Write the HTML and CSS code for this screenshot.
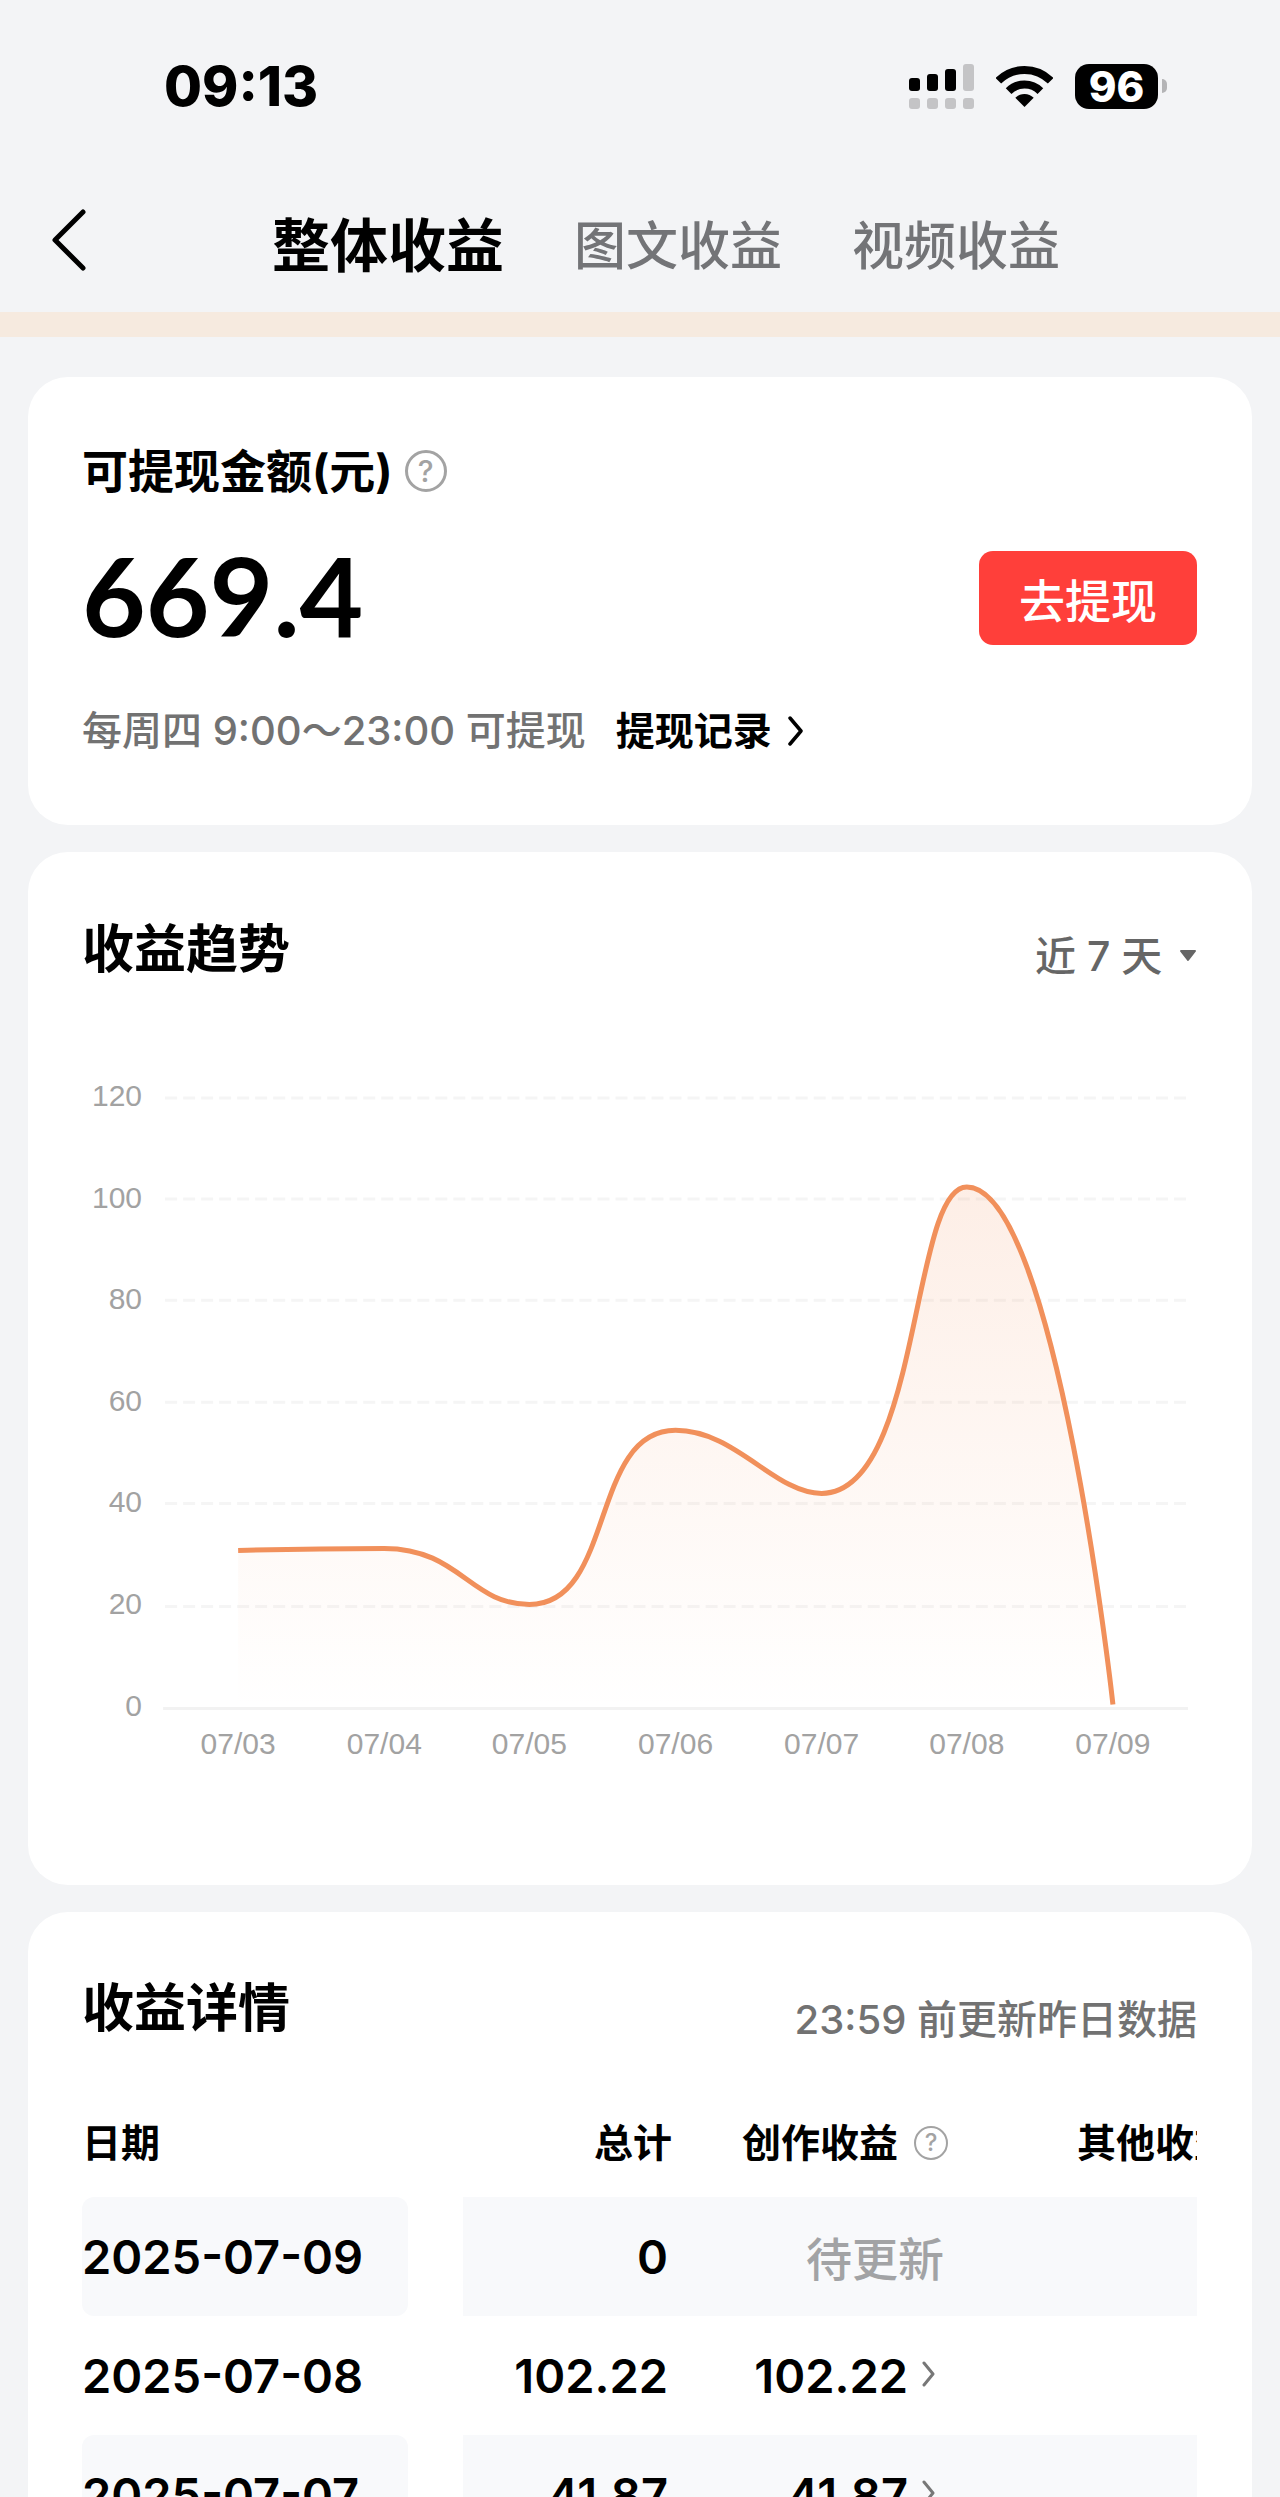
FILE: index.html
```
<!DOCTYPE html>
<html lang="zh-CN">
<head>
    <meta charset="UTF-8">
    <meta name="viewport" content="width=device-width, initial-scale=1.0">
    <title>整体收益</title>
    <link rel="stylesheet" href="styles.css">
</head>
<body>
    <div class="page">
        <div class="status-bar">
            <span class="time">09:13</span>
            <div class="status-icons">
                <svg class="signal" width="65" height="45" viewBox="0 0 65 45">
                    <rect x="0" y="14" width="11" height="13" rx="3"/>
                    <rect x="18" y="10" width="11" height="17" rx="3"/>
                    <rect x="36" y="5" width="11" height="22" rx="3"/>
                    <g fill="#c4c4c6">
                        <rect x="54" y="0" width="11" height="27" rx="3"/>
                        <rect x="0" y="34" width="11" height="11" rx="3"/>
                        <rect x="18" y="34" width="11" height="11" rx="3"/>
                        <rect x="36" y="34" width="11" height="11" rx="3"/>
                        <rect x="54" y="34" width="11" height="11" rx="3"/>
                    </g>
                </svg>
                <svg class="wifi" width="57" height="42" viewBox="0 0 57 42">
                    <path d="M2.3 15.8A37 37 0 0 1 54.7 15.8M12.6 26.1A22.5 22.5 0 0 1 44.4 26.1" fill="none" stroke="#000" stroke-width="8"/>
                    <path d="M28.5 42L19.3 32.8A13 13 0 0 1 37.7 32.8Z"/>
                </svg>
                <div class="battery">96</div>
            </div>
        </div>

        <header class="nav-bar">
            <button type="button" class="back" aria-label="返回">
                <svg width="34" height="62" viewBox="0 0 34 62">
                    <path d="M31 3L3 31L31 59" fill="none" stroke="#000" stroke-width="5" stroke-linecap="round" stroke-linejoin="round"/>
                </svg>
            </button>
            <nav class="tabs">
                <a href="#" class="active">整体收益</a>
                <a href="#">图文收益</a>
                <a href="#">视频收益</a>
            </nav>
        </header>
        <div class="notice"></div>

        <main>
            <section class="card balance">
                <h2>可提现金额(元)<button type="button" class="help" aria-label="说明">?</button></h2>
                <div class="amount-row">
                    <span class="amount">669.4</span>
                    <button type="button" class="withdraw">去提现</button>
                </div>
                <p class="tip">
                    <span>每周四 9:00～23:00 可提现</span>
                    <a href="#">提现记录
                        <svg width="16" height="30" viewBox="0 0 16 30">
                            <path d="M2 2L13 15L2 28" fill="none" stroke="#000" stroke-width="3.5" stroke-linecap="round" stroke-linejoin="round"/>
                        </svg>
                    </a>
                </p>
            </section>

            <section class="card trend">
                <div class="card-head">
                    <h3>收益趋势</h3>
                    <label class="range">
                        <select aria-label="时间范围">
                            <option>近 7 天</option>
                        </select>
                        <svg width="18" height="12" viewBox="0 0 18 12">
                            <path d="M2 1H16L9 10Z" fill="#666" stroke="#666" stroke-width="2" stroke-linejoin="round"/>
                        </svg>
                    </label>
                </div>
                <svg class="chart" viewBox="0 0 1114 710">
                    <defs>
                        <linearGradient id="area" x1="0" y1="0" x2="0" y2="1">
                            <stop offset="0" stop-color="#f38f58" stop-opacity="0.15"/>
                            <stop offset="1" stop-color="#f38f58" stop-opacity="0"/>
                        </linearGradient>
                    </defs>
                    <g class="grid">
                        <path d="M83 38H1104M83 139H1104M83 240H1104M83 342H1104M83 443H1104M83 546H1104"/>
                    </g>
                    <path class="axis" d="M81 648H1105"/>
                    <path d="M156 490C156 490 231 488 302 488C377 488 388 544 447 544C533 544 507 370 593 370C653 370 692 433 739 433C838 433 828 127 884 127C973 127 1030 644 1030 644V648H156Z" fill="url(#area)"/>
                    <path class="line" d="M156 490C156 490 231 488 302 488C377 488 388 544 447 544C533 544 507 370 593 370C653 370 692 433 739 433C838 433 828 127 884 127C973 127 1030 644 1030 644"/>
                    <g class="y-labels">
                        <text x="60" y="46">120</text>
                        <text x="60" y="148">100</text>
                        <text x="60" y="249">80</text>
                        <text x="60" y="351">60</text>
                        <text x="60" y="452">40</text>
                        <text x="60" y="554">20</text>
                        <text x="60" y="655">0</text>
                    </g>
                    <g class="x-labels">
                        <text x="156" y="693">07/03</text>
                        <text x="302" y="693">07/04</text>
                        <text x="447" y="693">07/05</text>
                        <text x="593" y="693">07/06</text>
                        <text x="739" y="693">07/07</text>
                        <text x="884" y="693">07/08</text>
                        <text x="1030" y="693">07/09</text>
                    </g>
                </svg>
            </section>

            <section class="card detail">
                <div class="card-head">
                    <h3>收益详情</h3>
                    <span class="update">23:59 前更新昨日数据</span>
                </div>
                <div class="tables">
                    <table class="dates">
                        <thead>
                            <tr><th>日期</th></tr>
                        </thead>
                        <tbody>
                            <tr><td>2025-07-09</td></tr>
                            <tr><td>2025-07-08</td></tr>
                            <tr><td>2025-07-07</td></tr>
                        </tbody>
                    </table>
                    <div class="scroller">
                        <table class="values">
                            <colgroup>
                                <col class="col-total">
                                <col class="col-create">
                                <col class="col-other">
                            </colgroup>
                            <thead>
                                <tr>
                                    <th>总计</th>
                                    <th>创作收益<button type="button" class="help small" aria-label="说明">?</button></th>
                                    <th>其他收益<button type="button" class="help small" aria-label="说明">?</button></th>
                                </tr>
                            </thead>
                            <tbody>
                                <tr>
                                    <td>0</td>
                                    <td class="pending">待更新</td>
                                    <td></td>
                                </tr>
                                <tr>
                                    <td>102.22</td>
                                    <td>102.22<svg class="arrow" width="14" height="26" viewBox="0 0 14 26"><path d="M2 2L11 13L2 24"/></svg></td>
                                    <td></td>
                                </tr>
                                <tr>
                                    <td>41.87</td>
                                    <td>41.87<svg class="arrow" width="14" height="26" viewBox="0 0 14 26"><path d="M2 2L11 13L2 24"/></svg></td>
                                    <td></td>
                                </tr>
                            </tbody>
                        </table>
                    </div>
                </div>
            </section>
        </main>
    </div>
</body>
</html>
```
FILE: styles.css
```
* {
    box-sizing: border-box;
}
body {
    margin: 0;
    background-color: #f3f4f6;
    color: #000;
    font-family: Inter, "Noto Sans CJK SC", sans-serif;
}
h2, h3, p {
    margin: 0;
}
a {
    color: inherit;
    text-decoration: none;
}
button, select {
    padding: 0;
    border: none;
    background: none;
    font-family: inherit;
    color: inherit;
    cursor: pointer;
}
svg {
    display: block;
}
.page {
    height: 100vh;
    overflow: hidden;
}

/* status bar */
.status-bar {
    display: flex;
    justify-content: space-between;
    align-items: center;
    height: 172px;
    padding: 0 112px 0 164px;
}
.time {
    font-size: 55px;
    font-weight: 800;
}
.status-icons {
    display: flex;
    align-items: center;
    gap: 22px;
}
.battery {
    position: relative;
    width: 83px;
    height: 45px;
    margin-right: 10px;
    border-radius: 14px;
    background-color: #000;
    color: #fff;
    font-size: 42px;
    font-weight: 800;
    line-height: 45px;
    text-align: center;
}
.battery::after {
    content: "";
    position: absolute;
    right: -9px;
    top: 15px;
    width: 5px;
    height: 14px;
    border-radius: 0 5px 5px 0;
    background-color: #b4b4b6;
}

/* nav */
.nav-bar {
    display: flex;
    align-items: center;
    height: 140px;
    padding: 0 52px 4px;
}
.tabs {
    display: flex;
    align-items: center;
    gap: 70px;
    margin-left: 186px;
    padding-top: 4px;
    font-size: 52px;
    color: #737477;
}
.tabs a {
    font-weight: 500;
}
.tabs .active {
    color: #000;
    font-size: 58px;
    font-weight: 700;
}
.notice {
    height: 25px;
    background-color: #f6eadf;
}

/* cards */
main {
    display: flex;
    flex-direction: column;
    gap: 27px;
    padding: 40px 28px 0;
}
.card {
    padding: 0 55px 0 54px;
    border-radius: 40px;
    background-color: #fff;
}
.card-head {
    display: flex;
    justify-content: space-between;
    align-items: flex-end;
}
.card-head h3 {
    font-size: 52px;
    font-weight: 700;
    line-height: 72px;
}
.help {
    width: 42px;
    height: 42px;
    border: 3px solid #a3a3a3;
    border-radius: 50%;
    color: #a3a3a3;
    font-size: 30px;
    font-weight: 500;
    line-height: 36px;
}
.help.small {
    width: 34px;
    height: 34px;
    margin-left: 16px;
    border-width: 2px;
    font-size: 24px;
    line-height: 30px;
}

/* balance */
.balance {
    padding-top: 64px;
    padding-bottom: 64px;
}
.balance h2 {
    display: flex;
    align-items: center;
    gap: 12px;
    font-size: 46px;
    font-weight: 700;
    line-height: 60px;
}
.amount-row {
    display: flex;
    justify-content: space-between;
    align-items: center;
    height: 94px;
    margin-top: 50px;
}
.amount {
    padding-bottom: 8px;
    font-family: Lato, sans-serif;
    font-size: 110px;
    font-weight: 700;
    line-height: 94px;
}
.withdraw {
    width: 218px;
    height: 94px;
    border-radius: 14px;
    background-color: #ff3f3a;
    color: #fff;
    font-size: 46px;
    font-weight: 500;
}
.tip {
    display: flex;
    gap: 30px;
    margin-top: 56px;
    color: #727272;
    font-size: 40px;
    font-weight: 500;
    line-height: 60px;
}
.tip a {
    display: flex;
    align-items: center;
    gap: 16px;
    color: #000;
    font-size: 39px;
    font-weight: 700;
}

/* trend */
.trend {
    padding-top: 62px;
    padding-bottom: 114px;
}
.range {
    display: flex;
    align-items: center;
    gap: 16px;
    color: #666;
}
.range select {
    appearance: none;
    font-size: 41px;
    font-weight: 500;
    line-height: 60px;
}
.chart {
    width: 100%;
    height: auto;
    margin-top: 74px;
}
.grid path {
    fill: none;
    stroke: #f5f5f5;
    stroke-width: 3;
    stroke-dasharray: 12 6;
}
.axis {
    stroke: #f2f2f2;
    stroke-width: 3;
}
.line {
    fill: none;
    stroke: #f1905b;
    stroke-width: 5;
}
.chart text {
    fill: #a2a2a2;
    font-family: "Liberation Sans", Arial, sans-serif;
    font-size: 30px;
}
.y-labels {
    text-anchor: end;
}
.x-labels {
    text-anchor: middle;
}

/* detail */
.detail {
    padding-top: 61px;
    padding-bottom: 64px;
}
.update {
    color: #727272;
    font-size: 40px;
    font-weight: 500;
    line-height: 50px;
}
.tables {
    display: flex;
    gap: 55px;
    margin-top: 42px;
}
.dates {
    width: 326px;
    flex-shrink: 0;
}
.scroller {
    flex: 1;
    overflow: hidden;
}
.tables table {
    border-collapse: separate;
    border-spacing: 0;
    table-layout: fixed;
}
.values {
    width: 820px;
}
.col-total {
    width: 209px;
}
.col-create {
    width: 276px;
}
.tables th {
    height: 110px;
    padding: 0 0 4px;
    font-size: 39px;
    font-weight: 700;
    white-space: nowrap;
}
.tables td {
    height: 119px;
    padding: 0;
    font-size: 47px;
    font-weight: 600;
}
.dates th {
    text-align: left;
}
.values th {
    text-align: right;
}
.values th .help {
    vertical-align: 6px;
}
.values td {
    padding-right: 4px;
    text-align: right;
}
.tables tbody tr:nth-child(odd) td {
    background-color: #f8f9fb;
}
.dates td {
    border-radius: 12px;
}
.values .pending {
    color: #a2a3a5;
    font-size: 46px;
    font-weight: 500;
}
.arrow {
    display: inline-block;
    margin: 0 8px 0 14px;
    vertical-align: 6px;
    fill: none;
    stroke: #777;
    stroke-width: 3;
    stroke-linecap: round;
    stroke-linejoin: round;
}
```
